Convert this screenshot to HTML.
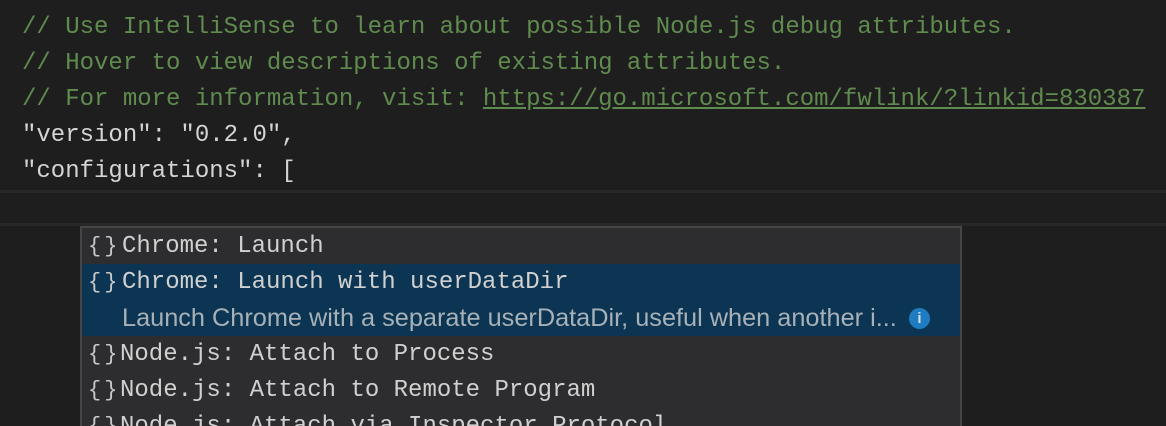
<!DOCTYPE html>
<html><head><style>
html,body{margin:0;width:1166px;height:426px;overflow:hidden;}
body{background:#1e1e1e;position:relative;font-family:"Liberation Mono",monospace;font-size:24px;}
.l{position:absolute;left:22px;height:36px;line-height:36px;white-space:pre;color:#d4d4d4;}
.c{color:#608b4e}
.u{text-decoration:underline}
.hl{position:absolute;left:0;right:0;top:190px;height:30px;border-top:3px solid #282828;border-bottom:3px solid #282828;}
.sw{position:absolute;left:80px;top:226px;width:878px;height:210px;background:#2d2d2f;border:2px solid #454545;}
.r{position:absolute;left:0;right:0;height:36px;line-height:36px;color:#d0d0d0;white-space:pre;}
.b{position:absolute;left:6px;color:#c8c8c8;font-size:22px;letter-spacing:3px}
.sel{position:absolute;left:0;right:0;top:36px;height:72px;background:#0b3552;}
.d{position:absolute;left:40px;top:72px;height:36px;line-height:36px;font-family:"Liberation Sans",sans-serif;font-size:25.3px;color:#a8b0b8;white-space:pre;}
.i{position:absolute;left:827px;top:80px;width:21px;height:21px;border-radius:50%;background:#1f7cc0;color:#cfe3f2;font:bold 15px "Liberation Sans",sans-serif;text-align:center;line-height:21px;}
</style></head><body>
<div class="l c" style="top:10px">// Use IntelliSense to learn about possible Node.js debug attributes.</div>
<div class="l c" style="top:46px">// Hover to view descriptions of existing attributes.</div>
<div class="l c" style="top:82px">// For more information, visit: <span class="u">https://go.microsoft.com/fwlink/?linkid=830387</span></div>
<div class="l" style="top:118px">"version": "0.2.0",</div>
<div class="l" style="top:154px">"configurations": [</div>
<div class="hl"></div>
<div class="sw">
<div class="sel"></div>
<div class="r" style="top:1px"><span class="b">{}</span><span style="position:absolute;left:40px">Chrome: Launch</span></div>
<div class="r" style="top:37px"><span class="b">{}</span><span style="position:absolute;left:40px">Chrome: Launch with userDataDir</span></div>
<div class="d">Launch Chrome with a separate userDataDir, useful when another i...</div>
<div class="i">i</div>
<div class="r" style="top:109px"><span class="b">{}</span><span style="position:absolute;left:38px">Node.js: Attach to Process</span></div>
<div class="r" style="top:145px"><span class="b">{}</span><span style="position:absolute;left:38px">Node.js: Attach to Remote Program</span></div>
<div class="r" style="top:181px"><span class="b">{}</span><span style="position:absolute;left:38px">Node.js: Attach via Inspector Protocol</span></div>
</div>
</body></html>
